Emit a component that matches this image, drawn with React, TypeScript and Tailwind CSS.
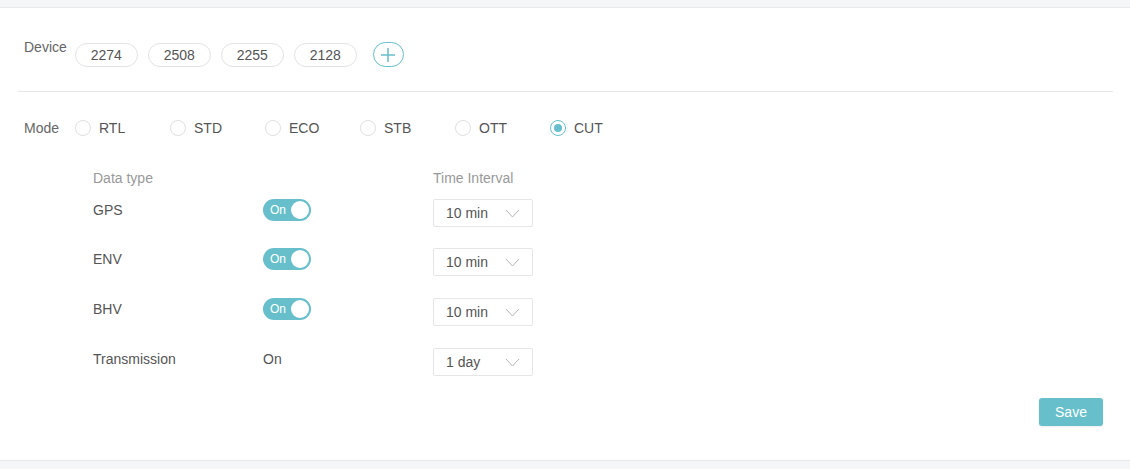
import { useState } from "react";

const devices = ["2274", "2508", "2255", "2128"];
const modes = ["RTL", "STD", "ECO", "STB", "OTT", "CUT"];

type Row = { label: string; toggle: boolean; interval: string };

const rows: Row[] = [
  { label: "GPS", toggle: true, interval: "10 min" },
  { label: "ENV", toggle: true, interval: "10 min" },
  { label: "BHV", toggle: true, interval: "10 min" },
  { label: "Transmission", toggle: false, interval: "1 day" },
];

const Toggle = () => (
  <div className="relative h-[22px] w-[48px] rounded-full bg-[#66bfca]">
    <span className="absolute left-[7px] top-[3px] text-[12px] leading-[16px] text-white">
      On
    </span>
    <span className="absolute right-[2px] top-[2px] h-[18px] w-[18px] rounded-full bg-white" />
  </div>
);

const IntervalSelect = ({ value }: { value: string }) => (
  <div className="flex h-[28px] w-[100px] items-center justify-between rounded-[2px] border border-[#e6e6e6] pl-[12px] pr-[12px] text-[14px] text-[#555]">
    <span>{value}</span>
    <svg width="15" height="9" viewBox="0 0 15 9" fill="none">
      <path d="M1 1l6.5 7L14 1" stroke="#b5b5b5" strokeWidth="1" />
    </svg>
  </div>
);

export default function App() {
  const [mode, setMode] = useState("CUT");

  return (
    <div className="flex h-[469px] w-[1130px] flex-col bg-white font-['Liberation_Sans',Arial,sans-serif] text-[14px]">
      <div className="h-[8px] shrink-0 border-b border-[#e8e9eb] bg-[#f5f6f8]" />

      <div className="flex flex-1 flex-col px-[17px] pl-[18px]">
        {/* devices */}
        <div className="flex items-start pl-[6px] pt-[29px]">
          <span className="leading-[20px] text-[#666]">Device</span>
          <div className="ml-[8px] mt-[5px] flex items-center gap-[10px]">
            {devices.map((d) => (
              <span
                key={d}
                className="flex h-[24px] w-[63px] items-center justify-center rounded-full border border-[#e3e3e3] leading-none text-[#555]"
              >
                {d}
              </span>
            ))}
            <button className="ml-[6px] flex h-[25px] w-[31px] items-center justify-center rounded-full border border-[#66bfca]">
              <svg width="14" height="14" viewBox="0 0 14 14">
                <path d="M7 0v14M0 7h14" stroke="#66bfca" strokeWidth="1.5" />
              </svg>
            </button>
          </div>
        </div>

        <div className="mt-[24px] h-px bg-[#e8e8e8]" />

        {/* mode */}
        <div className="flex items-center pl-[6px] pt-[26px]">
          <span className="w-[51px] leading-[20px] text-[#666]">Mode</span>
          {modes.map((m) => (
            <label
              key={m}
              onClick={() => setMode(m)}
              className="flex w-[95px] cursor-pointer items-center gap-[8px] leading-[20px] text-[#555]"
            >
              <span
                className={
                  mode === m
                    ? "flex h-[16px] w-[16px] items-center justify-center rounded-full border border-[#66bfca]"
                    : "h-[16px] w-[16px] rounded-full border border-[#e0e0e0]"
                }
              >
                {mode === m && (
                  <span className="h-[8px] w-[8px] rounded-full bg-[#66bfca]" />
                )}
              </span>
              {m}
            </label>
          ))}
        </div>

        {/* data types */}
        <div className="ml-[75px] mt-[30px] flex flex-col">
          <div className="flex leading-[20px] text-[#999]">
            <span className="w-[340px]">Data type</span>
            <span>Time Interval</span>
          </div>
          <div className="mt-[11px] flex flex-col">
            {rows.map((r, i) => (
              <div
                key={r.label}
                className={
                  i === 0
                    ? "mb-[21px] flex h-[28px] items-start"
                    : i === rows.length - 1
                    ? "flex h-[28px] items-start"
                    : "mb-[22px] flex h-[28px] items-start"
                }
              >
                <span className="mt-[1px] w-[170px] leading-[20px] text-[#555]">
                  {r.label}
                </span>
                <div className="w-[170px]">
                  {r.toggle ? (
                    <Toggle />
                  ) : (
                    <span className="mt-[1px] block leading-[20px] text-[#555]">On</span>
                  )}
                </div>
                <IntervalSelect value={r.interval} />
              </div>
            ))}
          </div>
        </div>

        <div className="mt-[22px] flex justify-end pr-[10px]">
          <button className="h-[28px] w-[64px] rounded-[3px] bg-[#66bfca] text-[14px] text-white shadow-[0_1px_2px_rgba(0,0,0,0.08)]">
            Save
          </button>
        </div>
      </div>

      <div className="h-[9px] shrink-0 border-t border-[#e8e9eb] bg-[#f5f6f8]" />
    </div>
  );
}
